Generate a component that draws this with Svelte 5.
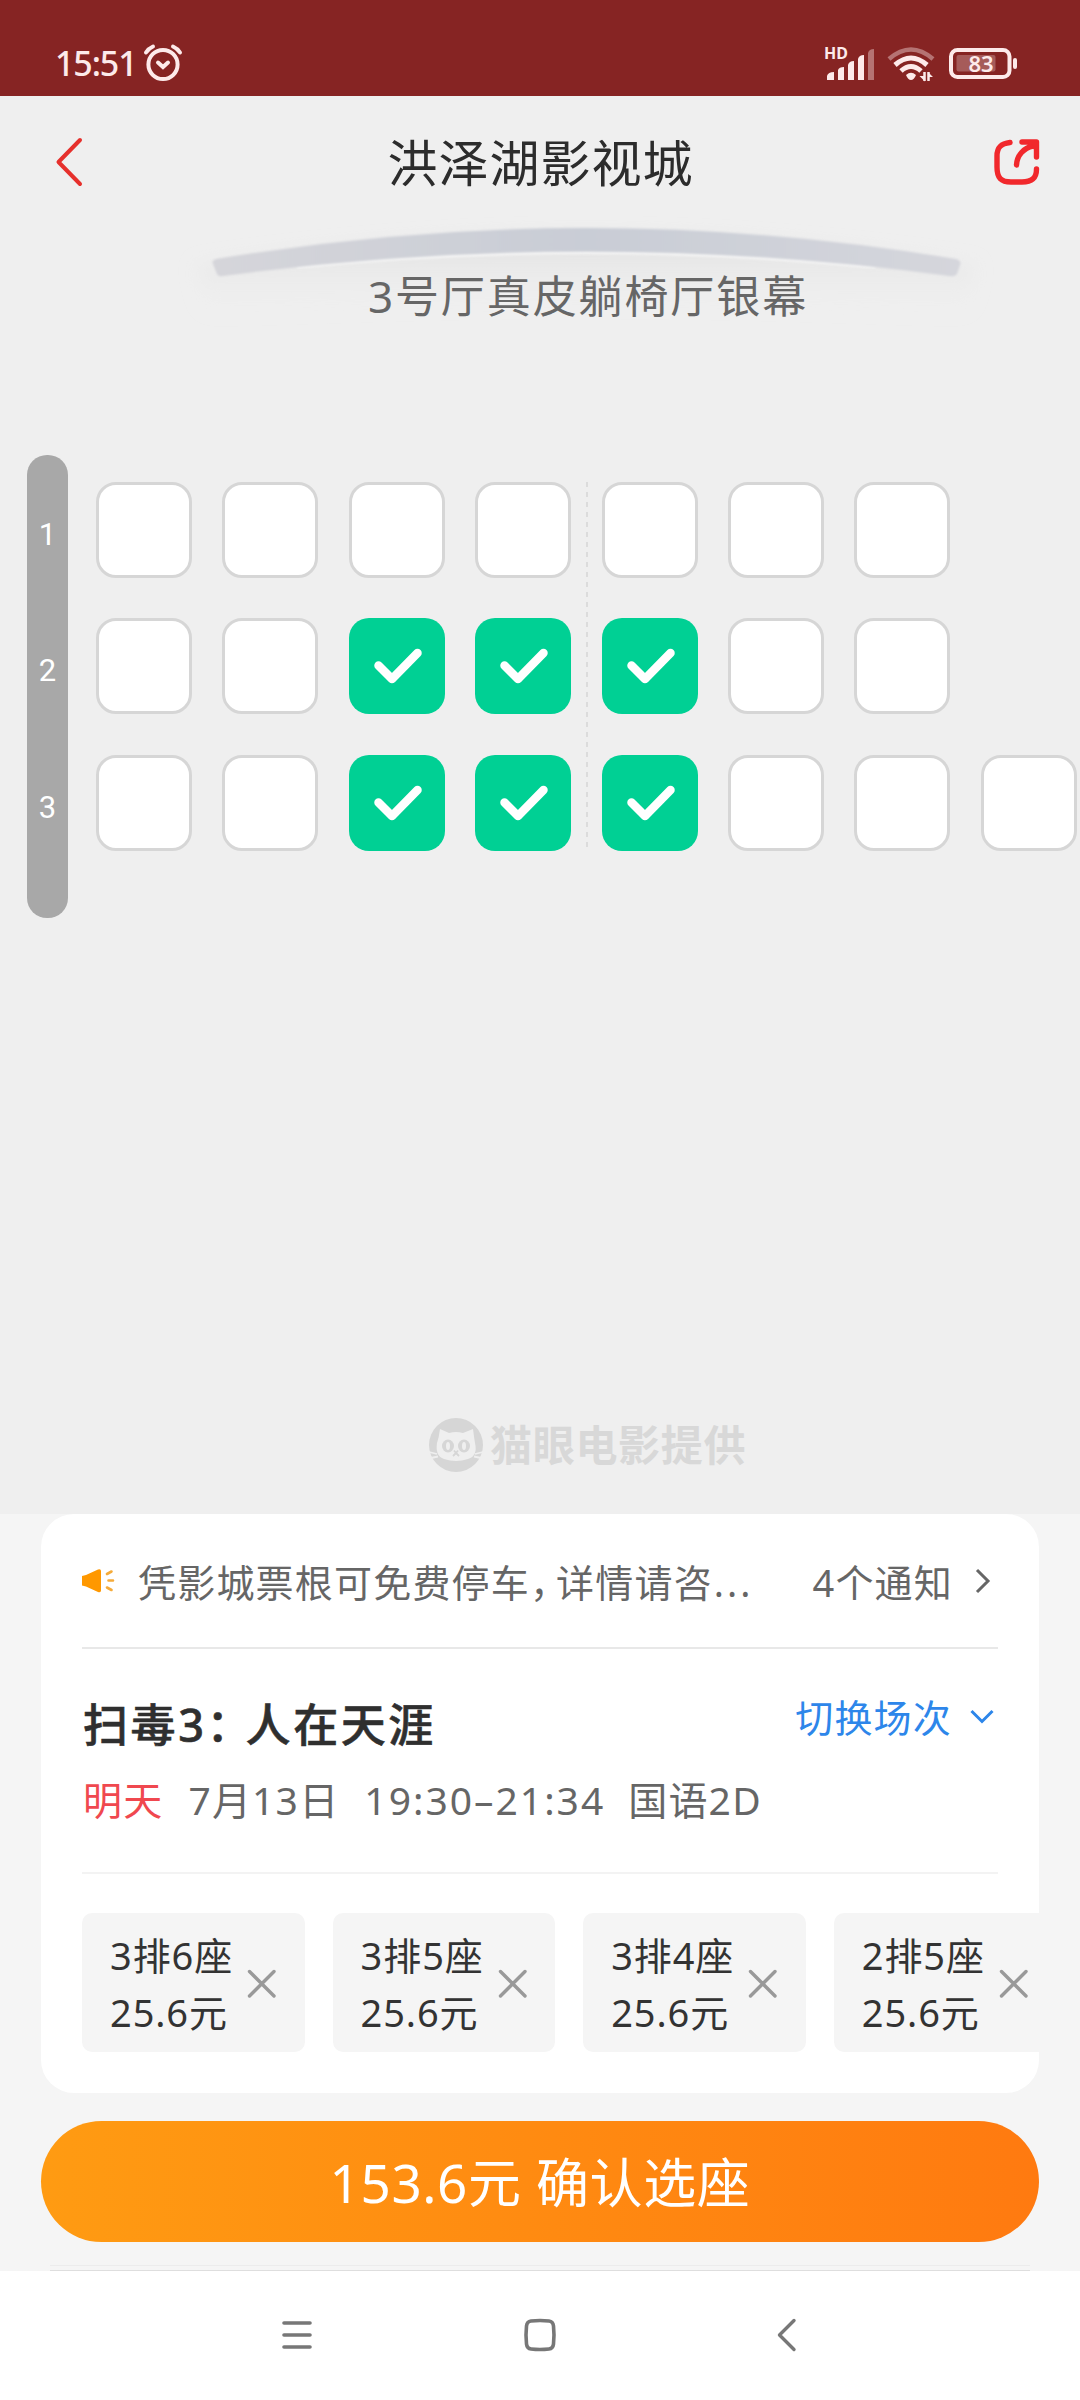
<script>
  const rows = [
    { label: '1', seats: [0, 0, 0, 0, 0, 0, 0] },
    { label: '2', seats: [0, 0, 1, 1, 1, 0, 0] },
    { label: '3', seats: [0, 0, 1, 1, 1, 0, 0, 0] },
  ];

  const tickets = [
    { seat: '3排6座', price: '25.6元' },
    { seat: '3排5座', price: '25.6元' },
    { seat: '3排4座', price: '25.6元' },
    { seat: '2排5座', price: '25.6元' },
  ];
</script>

<div class="page" lang="zh-CN">
  <div class="status-bar">
    <span class="time">15:51</span>
    <svg class="alarm" width="42" height="40" viewBox="0 0 42 40" fill="none" stroke="#fdeaea" stroke-width="4" stroke-linecap="round">
      <circle cx="21" cy="21.5" r="14.6" />
      <path d="M4 9.500 Q6.500 5.500 11 3.500 M38 9.500 Q35.500 5.500 31 3.500" />
      <path d="M16 19.500 L21 24 L26 19.500" />
    </svg>
    <div class="status-icons">
      <svg width="52" height="36" viewBox="0 0 52 36" fill="#fdeaea">
        <text class="hd" x="0" y="14">HD</text>
        <path d="M3 35 V31 Q4 27 10 27 V35 Z M14 35 V25 Q15 22 20 22 V35 Z M24 35 V20 Q25 16 30 16 V35 Z M34 35 V14 Q35 10 40 10 V35 Z" />
        <path d="M44 35 V8 Q45 4 50 4 V35 Z" opacity="0.4" />
      </svg>
      <svg class="wifi" width="48" height="36" viewBox="0 0 48 36" fill="none" stroke="#fdeaea" stroke-width="5">
        <path d="M2 14 Q24 -5 46 14" opacity="0.4" stroke-width="4.500" />
        <path d="M8 20 Q24 6 40 20" />
        <path d="M14 26 Q24 17 34 26" />
        <path d="M19 30 Q24 25.500 29 30 Q27 35 24 35 Q21 35 19 30 Z" fill="#fdeaea" stroke="none" />
        <path d="M37.500 27 V36 M41.500 27 V36" stroke-width="2.500" />
        <path d="M38 36.500 L32.500 31 H38 Z M41 27 L46 32 H41 Z" fill="#fdeaea" stroke="none" />
      </svg>
      <svg width="70" height="34" viewBox="0 0 70 34" fill="none">
        <rect x="2" y="4" width="58.500" height="27" rx="6.500" stroke="#fdeaea" stroke-width="4" />
        <rect x="7.500" y="9" width="39" height="16.500" rx="2" fill="#fdeaea" opacity="0.28" />
        <rect x="64" y="12" width="4" height="11" rx="2" fill="#fdeaea" />
        <text class="level" x="32" y="25.500" text-anchor="middle">83</text>
      </svg>
    </div>
  </div>

  <header>
    <svg class="back" width="30" height="52" viewBox="0 0 30 52" fill="none" stroke="#e6302c" stroke-width="4" stroke-linecap="round" stroke-linejoin="round">
      <path d="M25 4 L3.500 26 L25 48" />
    </svg>
    <h1>洪泽湖影视城</h1>
    <svg class="share" width="46" height="46" viewBox="0 0 46 46" fill="none" stroke="#f1282c" stroke-width="5.400" stroke-linecap="round" stroke-linejoin="round">
      <path d="M16 3.500 C7 4.500 3 8 3 17 V28 C3 39 7 43 17 43 H28 C38 43 42.500 39 42.500 30" />
      <path d="M28 3 H42.500 V18 M22.500 26 C23 16 30 9 39 7" />
      <path d="M35 4 H42 V11 Z" fill="#f1282c" stroke-width="2" />
    </svg>
  </header>

  <main>
    <div class="screen">
      <svg width="818" height="50" viewBox="0 0 818 50">
        <defs>
          <linearGradient id="arc" x1="0" x2="1" y1="0" y2="0">
            <stop offset="0" stop-color="#d5d5da" />
            <stop offset="0.5" stop-color="#c9cdd6" />
            <stop offset="1" stop-color="#d5d6dc" />
          </linearGradient>
          <linearGradient id="glow" x1="0" x2="0" y1="0" y2="1">
            <stop offset="0" stop-color="#e0e0e0" />
            <stop offset="1" stop-color="#efefef" stop-opacity="0" />
          </linearGradient>
          <filter id="soft" x="-10%" y="-50%" width="120%" height="200%">
            <feGaussianBlur stdDeviation="9" />
          </filter>
          <filter id="edge-soft" x="-2%" y="-10%" width="104%" height="120%">
            <feGaussianBlur stdDeviation="1" />
          </filter>
        </defs>
        <path d="M20 38 Q409 -20 798 38 L790 85 Q409 60 28 85 Z" fill="url(#glow)" filter="url(#soft)" />
        <path d="M120 39 Q409 10 698 39" fill="none" stroke="#f6f6f6" stroke-width="3" filter="url(#edge-soft)" />
        <path d="M36 36 Q34 33 39 31 Q409 -31 779 31 Q785 33 783 37 L780 46 Q778 49 772 48 Q409 -1 46 48 Q41 49 40 46 Z" fill="url(#arc)" filter="url(#edge-soft)" />
      </svg>
      <div class="hall">3号厅真皮躺椅厅银幕</div>
    </div>

    <div class="seat-map">
      <div class="row-labels">
        {#each rows as row}
          <span>{row.label}</span>
        {/each}
      </div>
      <div class="seats">
        {#each rows as row}
          <div class="seat-row">
            {#each row.seats as picked}
              <div class="seat" class:picked={picked === 1}>
                {#if picked}
                  <svg width="96" height="96" viewBox="0 0 96 96" fill="none" stroke="#fff" stroke-width="8.500" stroke-linecap="round" stroke-linejoin="round">
                    <path d="M29.500 47.500 L43 61 L68.500 35" />
                  </svg>
                {/if}
              </div>
            {/each}
          </div>
        {/each}
        <div class="aisle"></div>
      </div>
    </div>

    <div class="provider">
      <svg width="56" height="54" viewBox="0 0 56 54">
        <circle cx="28" cy="27" r="27" fill="#d6d6d6" />
        <path d="M12 11 L21 15 Q28 13 35 15 L45 11 Q46 19 47 25 Q50 38 40 41 Q28 45 16 41 Q7 38 9 25 Q11 19 12 11 Z" fill="#efefef" />
        <ellipse cx="20" cy="28" rx="6" ry="6.500" fill="#d6d6d6" />
        <ellipse cx="36" cy="28" rx="6" ry="6.500" fill="#d6d6d6" />
        <ellipse cx="20" cy="28" rx="2" ry="4" fill="#efefef" />
        <ellipse cx="36" cy="28" rx="2" ry="4" fill="#efefef" />
        <path d="M26 32.500 L28 35 L30 32.500 M28 35 L25 38 M28 35 L31 38" stroke="#d6d6d6" stroke-width="1.800" fill="none" />
        <path d="M1 34 L9 36 M3 40 L10 38.500 M55 34 L47 36 M53 40 L46 38.500" stroke="#efefef" stroke-width="1.800" />
      </svg>
      <span>猫眼电影提供</span>
    </div>
  </main>

  <section class="bottom">
    <div class="card">
      <div class="notice">
        <svg width="34" height="26" viewBox="0 0 34 26">
          <path d="M0 8 L4 7 L16 1.500 Q19 0.500 19 3 V22.500 Q19 25 16 24 L4 18.500 L0 17.500 Z" fill="#ff9800" />
          <path d="M25 6 L29.500 3.500 M26.500 12.500 H31 M25 19.500 L29.500 22" stroke="#f5ab3a" stroke-width="2.600" stroke-linecap="round" />
        </svg>
        <span class="notice-text">凭影城票根可免费停车<span class="comma">，</span>详情请咨<span class="dots">...</span></span>
        <span class="notice-count">4个通知</span>
        <svg class="arrow" width="16" height="28" viewBox="0 0 16 28" fill="none" stroke="#666" stroke-width="3">
          <path d="M2 3 L13 14 L2 25" />
        </svg>
      </div>

      <div class="show">
        <div class="show-head">
          <h2>扫毒3<span class="colon">：</span>人在天涯</h2>
          <div class="switch">
            <span>切换场次</span>
            <svg width="24" height="16" viewBox="0 0 24 16" fill="none" stroke="#2d86ea" stroke-width="3">
              <path d="M1.500 2 L12 12.500 L22.500 2" />
            </svg>
          </div>
        </div>
        <div class="show-info">
          <span class="day">明天</span>
          <span class="date">7月13日</span>
          <span class="hours">19:30–21:34</span>
          <span>国语2D</span>
        </div>
      </div>

      <div class="tickets">
        {#each tickets as ticket}
          <div class="ticket">
            <div class="ticket-text">
              <div>{ticket.seat}</div>
              <div>{ticket.price}</div>
            </div>
            <svg width="30" height="30" viewBox="0 0 30 30" stroke="#999" stroke-width="3.400" stroke-linecap="round">
              <path d="M2.500 2.500 L27 27 M27 2.500 L2.500 27" />
            </svg>
          </div>
        {/each}
      </div>
    </div>

    <button class="confirm">153.6元 确认选座</button>
    <div class="edge"></div>
  </section>

  <nav>
    <svg width="30" height="34" viewBox="0 0 30 34" stroke="#777" stroke-width="3.600" stroke-linecap="round">
      <path d="M2 5 H28 M2 17 H28 M2 29 H28" />
    </svg>
    <svg class="home" width="34" height="34" viewBox="0 0 34 34" fill="none" stroke="#777" stroke-width="3.600">
      <path d="M8 3 Q17 2 26 3 Q30 3.500 30.500 8 Q31.500 17 30.500 26 Q30 30.500 26 31 Q17 32 8 31 Q4 30.500 3.500 26 Q2.500 17 3.500 8 Q4 3.500 8 3 Z" />
    </svg>
    <svg width="20" height="34" viewBox="0 0 20 34" fill="none" stroke="#777" stroke-width="3.400" stroke-linecap="round" stroke-linejoin="round">
      <path d="M17 2.500 L2.500 17 L17 31.500" />
    </svg>
  </nav>
</div>

<style>
  :global(body) {
    margin: 0;
    background: #efefef;
  }

  .page {
    width: 1080px;
    height: 2400px;
    display: flex;
    flex-direction: column;
    overflow: hidden;
    background: #efefef;
    color: #333;
    font-family: 'Noto Sans', 'Noto Sans CJK SC', sans-serif;
  }

  svg {
    display: block;
    flex-shrink: 0;
    overflow: visible;
  }

  .status-bar {
    height: 96px;
    box-sizing: border-box;
    padding: 30px 61px 0 55px;
    display: flex;
    align-items: center;
    background: #862423;
    color: #fdeaea;
  }

  .time {
    width: 80px;
    padding-top: 1px;
    font-size: 34px;
    font-weight: 500;
    line-height: 65px;
    letter-spacing: -1.1px;
    white-space: nowrap;
  }

  .alarm {
    margin-left: 7px;
  }

  .status-icons {
    margin-left: auto;
    display: flex;
    align-items: center;
  }

  .wifi {
    margin: 0 14px 0 11px;
  }

  .hd {
    font-size: 16px;
    font-weight: 700;
  }

  .level {
    font-size: 22px;
    font-weight: 600;
    fill: #fdeaea;
  }

  header {
    height: 132px;
    box-sizing: border-box;
    padding: 0 40px 0 55px;
    display: flex;
    align-items: center;
    justify-content: space-between;
  }

  h1 {
    margin: 0;
    padding: 2px 0 0 2px;
    font-size: 50px;
    font-weight: 400;
    line-height: 60px;
    letter-spacing: 1px;
    color: #2c2c2c;
  }

  main {
    height: 1286px;
    display: flex;
    flex-direction: column;
  }

  .screen {
    width: 818px;
    height: 227px;
    margin-left: 177px;
  }

  .hall {
    margin-top: -7px;
    padding-left: 4px;
    font-size: 44px;
    line-height: 50px;
    letter-spacing: 1.9px;
    text-align: center;
    color: #666;
    position: relative;
  }

  .seat-map {
    display: flex;
    padding-left: 27px;
  }

  .row-labels {
    width: 41px;
    height: 463px;
    box-sizing: border-box;
    padding-top: 32px;
    display: flex;
    flex-direction: column;
    gap: 40.4px;
    border-radius: 20px;
    background: #a8a8a8;
    color: #fff;
    font-family: Roboto, sans-serif;
    font-size: 31px;
    line-height: 96px;
    text-align: center;
  }

  .seats {
    position: relative;
    margin-left: 28px;
    padding-top: 27px;
    display: flex;
    flex-direction: column;
    gap: 40.4px;
    align-self: flex-start;
  }

  .seat-row {
    display: flex;
    gap: 30.4px;
  }

  .seat {
    width: 96px;
    height: 96px;
    box-sizing: border-box;
    border: 3px solid #d6d6d6;
    border-radius: 20px;
    background: #fff;
  }

  .seat.picked {
    border: none;
    background: #00d094;
  }

  .aisle {
    position: absolute;
    top: 27px;
    bottom: 0;
    left: 490px;
    width: 2px;
    background: repeating-linear-gradient(#dcdcdc 0 5px, transparent 5px 10px);
  }

  .provider {
    margin-top: auto;
    padding: 0 0 42px 428px;
    display: flex;
    align-items: center;
    color: #d8d8d8;
    font-size: 42px;
    font-weight: 700;
    line-height: 54px;
    letter-spacing: 0.7px;
  }

  .provider span {
    margin-left: 6px;
  }

  .bottom {
    height: 757px;
    padding: 0 41px;
    background: #f5f5f5;
  }

  .card {
    height: 579px;
    border-radius: 33px;
    background: #fff;
    overflow: hidden;
  }

  .notice {
    height: 135px;
    box-sizing: border-box;
    margin: 0 41px;
    display: flex;
    align-items: center;
    border-bottom: 2px solid #e8e8e8;
    color: #666;
    font-size: 38px;
    letter-spacing: 1.2px;
    line-height: 50px;
  }

  .notice-text {
    width: 620px;
    margin-left: 22px;
    padding-top: 2px;
    white-space: nowrap;
  }

  .comma {
    letter-spacing: -12px;
  }

  .dots {
    margin-left: 1px;
    letter-spacing: 3px;
  }

  .notice-count {
    margin-left: auto;
    padding-top: 2px;
    white-space: nowrap;
  }

  .arrow {
    margin: 0 7px 0 22px;
  }

  .show {
    height: 225px;
    box-sizing: border-box;
    margin: 0 41px;
    padding: 48px 4px 0 1px;
    border-bottom: 2px solid #f3f3f3;
  }

  .show-head {
    height: 56px;
    display: flex;
    justify-content: space-between;
  }

  h2 {
    margin: 0;
    font-size: 45px;
    font-weight: 500;
    line-height: 56px;
    letter-spacing: 2.6px;
    color: #2f2f2f;
    -webkit-text-stroke: 0.6px #2f2f2f;
  }

  .colon {
    letter-spacing: -6px;
  }

  .switch {
    display: flex;
    align-items: center;
    height: 40px;
    color: #2d86ea;
    font-size: 38px;
    letter-spacing: 1.2px;
  }

  .switch span {
    padding-bottom: 4px;
  }

  .switch svg {
    margin-left: 18px;
  }

  .show-info {
    margin-top: 22px;
    display: flex;
    color: #666;
    font-size: 39px;
    letter-spacing: 1.2px;
    line-height: 50px;
  }

  .show-info span {
    margin-right: 25px;
  }

  .show-info .day {
    color: #f0484f;
  }

  .show-info .hours {
    margin-right: 23px;
    letter-spacing: 2px;
  }

  .tickets {
    margin: 39px 0 0 41px;
    display: flex;
    gap: 28px;
  }

  .ticket {
    width: 222.6px;
    height: 139px;
    box-sizing: border-box;
    padding: 2px 0 0 28px;
    flex-shrink: 0;
    display: flex;
    align-items: center;
    border-radius: 10px;
    background: #f5f5f5;
  }

  .ticket-text {
    width: 137px;
    font-size: 38px;
    line-height: 57px;
    letter-spacing: 0.9px;
    white-space: nowrap;
  }

  .confirm {
    display: block;
    width: 998px;
    height: 121px;
    margin-top: 28px;
    padding: 2px 0 0;
    border: none;
    border-radius: 61px;
    background: linear-gradient(90deg, #ff9b12, #ff7a10);
    color: #fff;
    font-family: inherit;
    font-size: 53px;
    line-height: 119px;
    letter-spacing: 0.6px;
  }

  .edge {
    height: 4px;
    margin: 23px 9px 0;
    border-top: 1px solid #ececec;
    border-bottom: 1px solid #dedede;
  }

  nav {
    flex: 1;
    padding: 0 283px 2px 282px;
    display: flex;
    align-items: center;
    justify-content: space-between;
    background: #fff;
  }

  .home {
    margin-right: 10px;
  }
</style>
